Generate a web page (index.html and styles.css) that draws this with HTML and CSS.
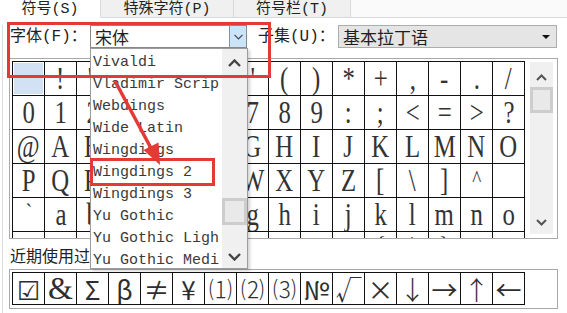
FILE: index.html
```html
<!DOCTYPE html>
<html>
 <head>
  <meta charset="utf-8">
  <title>符号</title>
  <link rel="stylesheet" href="styles.css">
 </head>
 <body>
 <div class="dialog">
  <div class="tabs">
   <div class="tab tab-sym">符号(S)</div>
   <div class="tab tab-special">特殊字符(P)</div>
   <div class="tab tab-bar">符号栏(T)</div>
   <div class="tab-rest"></div>
  </div>

  <div class="panel">
   <div class="font-row">
    <span class="lbl lbl-font">字体(F)：</span>
    <div class="combo combo-font">
     <span class="combo-text">宋体</span>
     <span class="combo-btn"><svg width="9" height="6" viewBox="0 0 9 6"><polyline points="0.5,0.8 4.5,4.8 8.5,0.8" fill="none" stroke="#445" stroke-width="1.2"/></svg></span>
    </div>
    <span class="lbl lbl-sub">子集(U)：</span>
    <div class="combo combo-sub">
     <span class="combo-text">基本拉丁语</span>
     <span class="combo-arrow"></span>
    </div>
   </div>

   <div class="frame sym-frame">
    <div class="sym-grid">
     <div class="cell sel"><span> </span></div><div class="cell"><span>!</span></div><div class="cell"><span>&quot;</span></div><div class="cell"><span>#</span></div><div class="cell"><span>$</span></div><div class="cell"><span>%</span></div><div class="cell"><span>&amp;</span></div><div class="cell"><span>'</span></div><div class="cell"><span>(</span></div><div class="cell"><span>)</span></div><div class="cell"><span>*</span></div><div class="cell"><span>+</span></div><div class="cell"><span>,</span></div><div class="cell"><span>-</span></div><div class="cell"><span>.</span></div><div class="cell"><span>/</span></div>
     <div class="cell"><span>0</span></div><div class="cell"><span>1</span></div><div class="cell"><span>2</span></div><div class="cell"><span>3</span></div><div class="cell"><span>4</span></div><div class="cell"><span>5</span></div><div class="cell"><span>6</span></div><div class="cell"><span>7</span></div><div class="cell"><span>8</span></div><div class="cell"><span>9</span></div><div class="cell"><span>:</span></div><div class="cell"><span>;</span></div><div class="cell"><span>&lt;</span></div><div class="cell"><span>=</span></div><div class="cell"><span>&gt;</span></div><div class="cell"><span>?</span></div>
     <div class="cell"><span>@</span></div><div class="cell"><span>A</span></div><div class="cell"><span>B</span></div><div class="cell"><span>C</span></div><div class="cell"><span>D</span></div><div class="cell"><span>E</span></div><div class="cell"><span>F</span></div><div class="cell"><span>G</span></div><div class="cell"><span>H</span></div><div class="cell"><span>I</span></div><div class="cell"><span>J</span></div><div class="cell"><span>K</span></div><div class="cell"><span>L</span></div><div class="cell"><span>M</span></div><div class="cell"><span>N</span></div><div class="cell"><span>O</span></div>
     <div class="cell"><span>P</span></div><div class="cell"><span>Q</span></div><div class="cell"><span>R</span></div><div class="cell"><span>S</span></div><div class="cell"><span>T</span></div><div class="cell"><span>U</span></div><div class="cell"><span>V</span></div><div class="cell"><span>W</span></div><div class="cell"><span>X</span></div><div class="cell"><span>Y</span></div><div class="cell"><span>Z</span></div><div class="cell"><span>[</span></div><div class="cell"><span>\</span></div><div class="cell"><span>]</span></div><div class="cell"><span class="hat">^</span></div><div class="cell"><span> </span></div>
     <div class="cell"><span class="hat">`</span></div><div class="cell"><span>a</span></div><div class="cell"><span>b</span></div><div class="cell"><span>c</span></div><div class="cell"><span>d</span></div><div class="cell"><span>e</span></div><div class="cell"><span>f</span></div><div class="cell"><span>g</span></div><div class="cell"><span>h</span></div><div class="cell"><span>i</span></div><div class="cell"><span>j</span></div><div class="cell"><span>k</span></div><div class="cell"><span>l</span></div><div class="cell"><span>m</span></div><div class="cell"><span>n</span></div><div class="cell"><span>o</span></div>
     <div class="cell"><span>p</span></div><div class="cell"><span>q</span></div><div class="cell"><span>r</span></div><div class="cell"><span>s</span></div><div class="cell"><span>t</span></div><div class="cell"><span>u</span></div><div class="cell"><span>v</span></div><div class="cell"><span>w</span></div><div class="cell"><span>x</span></div><div class="cell"><span>y</span></div><div class="cell"><span>z</span></div><div class="cell"><span>{</span></div><div class="cell"><span>|</span></div><div class="cell"><span>}</span></div><div class="cell"><span>~</span></div><div class="cell"><span> </span></div>
    </div>
    <div class="vscroll">
     <div class="sb-btn sb-up"><svg width="11" height="7" viewBox="0 0 11 7"><polyline points="1,6 5.5,1.5 10,6" fill="none" stroke="#555" stroke-width="2"/></svg></div>
     <div class="sb-thumb"></div>
     <div class="sb-btn sb-down"><svg width="11" height="7" viewBox="0 0 11 7"><polyline points="1,1 5.5,5.5 10,1" fill="none" stroke="#555" stroke-width="2"/></svg></div>
    </div>
   </div>

   <div class="recent-label">近期使用过的符号(R)：</div>
   <div class="frame recent-frame">
    <div class="sym-grid recent">
     <div class="cell">☑</div><div class="cell amp">&amp;</div><div class="cell">Σ</div><div class="cell">β</div><div class="cell">≠</div><div class="cell">¥</div><div class="cell paren">⑴</div><div class="cell paren">⑵</div><div class="cell paren">⑶</div><div class="cell">№</div><div class="cell thin">√</div><div class="cell">×</div><div class="cell thin">↓</div><div class="cell">→</div><div class="cell thin">↑</div><div class="cell">←</div>
    </div>
   </div>
  </div>

  <!-- open font list -->
  <div class="droplist">
   <ul class="items">
    <li>Vivaldi</li>
    <li>Vladimir Script</li>
    <li>Webdings</li>
    <li>Wide Latin</li>
    <li>Wingdings</li>
    <li>Wingdings 2</li>
    <li>Wingdings 3</li>
    <li>Yu Gothic</li>
    <li>Yu Gothic Light</li>
    <li>Yu Gothic Medium</li>
   </ul>
   <div class="lscroll">
    <div class="sb-btn sb-top"><svg width="13" height="8" viewBox="0 0 13 8"><polyline points="1,7 6.5,1.5 12,7" fill="none" stroke="#444" stroke-width="2.4"/></svg></div>
    <div class="sb-thumb lthumb"></div>
    <div class="sb-btn sb-bottom"><svg width="13" height="8" viewBox="0 0 13 8"><polyline points="1,1 6.5,6.5 12,1" fill="none" stroke="#444" stroke-width="2.4"/></svg></div>
   </div>
  </div>

  <div class="mark mark-font"></div>
  <div class="mark mark-item"></div>
  <svg class="arrow" width="567" height="313" viewBox="0 0 567 313">
   <line x1="115" y1="81" x2="152" y2="150" stroke="#e53935" stroke-width="3.5"/>
   <polygon points="160,165 143.5,150 158.5,142.5" fill="#e53935"/>
  </svg>
 </div>
 </body>
</html>
```
FILE: styles.css
```css
* { box-sizing: border-box; margin: 0; padding: 0; }
body { background: #fff; color: #222; font-family: "Liberation Mono", "Noto Sans CJK SC", monospace; }
.dialog { position: relative; width: 567px; height: 313px; overflow: hidden; background: #fff; }

.tabs { display: flex; height: 18px; }
.tab { height: 18px; display: flex; align-items: flex-end; justify-content: center; padding-bottom: 0; overflow: hidden; font-size: 15px; line-height: 15px; background: #f0f0f0; border-right: 1px solid #d9d9d9; border-bottom: 1px solid #d9d9d9; }
.tab-sym { width: 101px; background: #fff; border-bottom-color: #fff; }
.tab-special { width: 133px; }
.tab-bar { width: 117px; }
.tab-rest { flex: 1; background: #fafafa; border-bottom: 1px solid #d9d9d9; }

.panel { margin-left: 2px; height: 295px; border-left: 1px solid #dcdcdc; }

.font-row { display: flex; align-items: center; height: 23px; margin-top: 7px; padding-left: 7px; }
.lbl { font-size: 16px; line-height: 18px; white-space: nowrap; }
.lbl-font { width: 80px; }
.lbl-sub { width: 80px; margin-left: 11px; }
.combo { display: flex; align-items: stretch; height: 23px; border: 1px solid #8a8a8a; background: #fff; }
.combo-font { width: 157px; }
.combo-text { flex: 1; padding-left: 4px; font-family: "Noto Sans CJK SC", sans-serif; font-size: 17px; line-height: 21px; color: #1e1e1e; }
.combo-btn { width: 17px; display: flex; align-items: center; justify-content: center; background: #cce4f7; border-left: 1px solid #569de5; }
.combo-sub { width: 219px; align-items: center; background: #e5e5e5; border-color: #adadad; }
.combo-arrow { width: 0; height: 0; margin-right: 6px; border-left: 4px solid transparent; border-right: 4px solid transparent; border-top: 4px solid #111; }

.frame { width: 549px; border: 1px solid #a8a8a8; padding: 2px 0 0 2px; overflow: hidden; }
.sym-frame { display: flex; align-items: flex-start; height: 181px; margin: 10px 0 0 6px; }
.sym-grid { flex: none; display: grid; grid-template-columns: repeat(16, 31px); gap: 1px; width: 513px; background: #111; border: 1px solid #111; }
.sym-grid .cell { height: 33px; display: flex; align-items: center; justify-content: center; background: #fff; color: #333; font-family: "Liberation Serif", serif; font-size: 31px; overflow: hidden; }
.cell span { display: inline-block; transform: scaleX(0.8); line-height: 33px; }
.cell span.hat { font-size: 24px; line-height: 28px; align-self: flex-start; }
.sym-grid .cell.sel { background: #d3e1f4; box-shadow: inset 0 0 0 1px #fff; }

.vscroll { flex: none; display: flex; flex-direction: column; width: 23px; height: 172px; margin: 1px 0 0 5px; background: #f0f0f0; }
.sb-btn { flex: none; display: flex; align-items: center; justify-content: center; height: 25px; }
.sb-up { padding-top: 5px; }
.sb-thumb { flex: none; height: 26px; background: #e9e9e9; border: 3px solid #cdcdcd; }
.sb-down { margin-top: auto; height: 24px; }

.recent-label { margin: 11px 0 0 7px; font-size: 16px; line-height: 16px; white-space: nowrap; }
.recent-frame { height: 40px; margin: 3px 0 0 6px; }
.recent .cell { height: 31px; font-family: "Noto Sans CJK SC", "DejaVu Sans", sans-serif; font-size: 26px; line-height: 31px; color: #2e2e2e; }
.recent .cell.amp { font-family: "Liberation Serif", serif; font-size: 32px; }
.recent .cell.paren { font-size: 23px; font-weight: 300; }
.recent .cell.thin { font-weight: 300; }

.droplist { position: absolute; left: 90px; top: 48px; width: 158px; height: 221px; display: flex; background: #fff; border: 1px solid #9c9c9c; box-shadow: 2px 2px 3px rgba(0, 0, 0, 0.18); }
.items { flex: 1; padding-top: 3px; list-style: none; overflow: hidden; }
.items li { width: 128px; height: 22px; padding-left: 2px; overflow: hidden; font-size: 15px; line-height: 22px; color: #3a3a3a; white-space: nowrap; }
.lscroll { flex: none; display: flex; flex-direction: column; width: 25px; background: #f0f0f0; }
.sb-top { height: 28px; }
.lthumb { margin-top: 121px; height: 27px; }
.sb-bottom { margin-top: auto; height: 22px; }

.mark { position: absolute; border: 3px solid #e53935; }
.mark-font { left: 7px; top: 22px; width: 264px; height: 56px; }
.mark-item { left: 90px; top: 158px; width: 125px; height: 28px; }
.arrow { position: absolute; left: 0; top: 0; pointer-events: none; }
```
